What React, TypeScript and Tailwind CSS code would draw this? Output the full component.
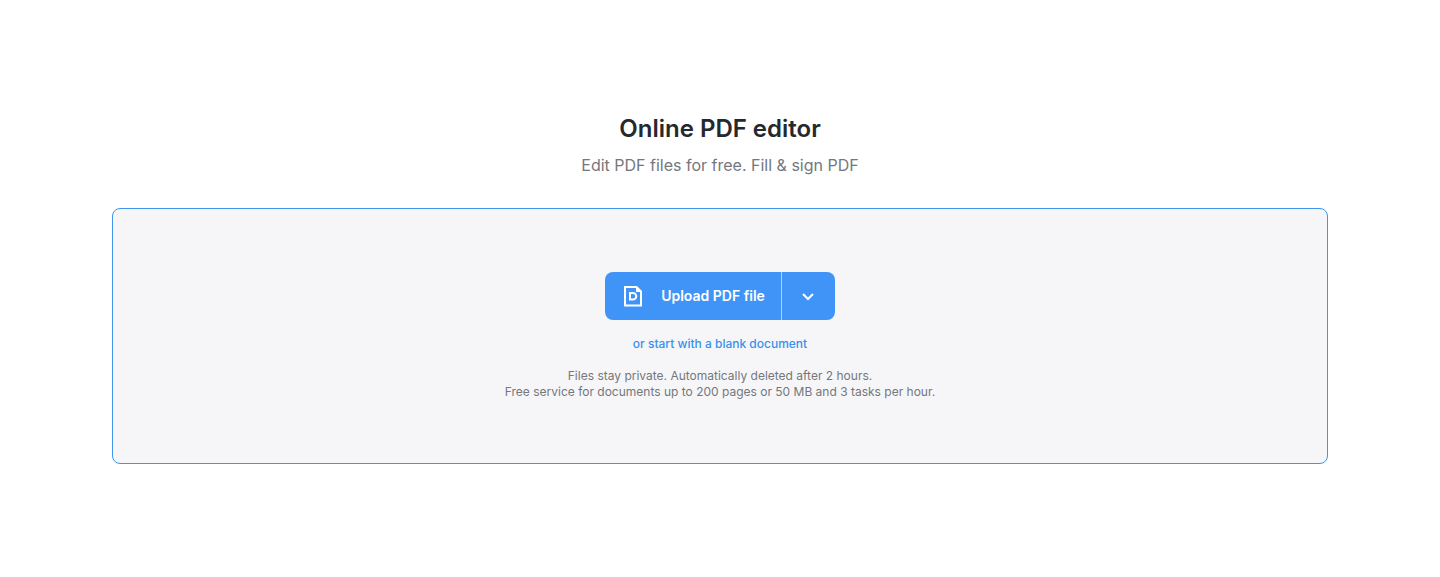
export default function App() {
  return (
    <main className="min-h-screen bg-white px-6 pt-[113px] pb-28 font-['Inter',sans-serif] lg:px-28">
      <header className="text-center">
        <h1 className="text-2xl leading-8 font-semibold text-[#25282d]">Online PDF editor</h1>
        <p className="mt-2 text-base leading-6 text-[#74777d]">Edit PDF files for free. Fill &amp; sign PDF</p>
      </header>
      <section className="mt-[31px] flex flex-col items-center rounded-lg border border-[#3d96ee] bg-[#f6f6f8] px-4 py-[63px] text-center">
        <div className="flex h-12 overflow-hidden rounded-lg bg-[#4094f7] text-white">
          <button type="button" className="flex items-center gap-4 px-4 text-sm font-semibold">
            <svg className="size-6" viewBox="0 0 24 24" fill="none" stroke="currentColor" strokeWidth="2" aria-hidden="true">
              <path d="M4 3h11.5L20 7.5V21.500H4z" />
              <path d="M15 2l6 6h-6z" fill="currentColor" stroke="none" />
              <path d="M9 9h3a3.250 3.250 0 0 1 0 6.500H9z" />
            </svg>
            Upload PDF file
          </button>
          <button type="button" aria-label="More upload options" className="flex w-[54px] items-center justify-center border-l border-[#b3d4fc]">
            <svg className="size-6" viewBox="0 0 24 24" fill="none" stroke="currentColor" strokeWidth="2" aria-hidden="true">
              <path d="M7 10l5 5 5-5" />
            </svg>
          </button>
        </div>
        <a href="#blank" className="mt-4 text-xs leading-4 font-medium text-[#3990ec]">or start with a blank document</a>
        <p className="mt-4 text-xs leading-4 text-[#74777d]">
          Files stay private. Automatically deleted after 2 hours.
          <br />
          Free service for documents up to 200 pages or 50 MB and 3 tasks per hour.
        </p>
      </section>
    </main>
  );
}
